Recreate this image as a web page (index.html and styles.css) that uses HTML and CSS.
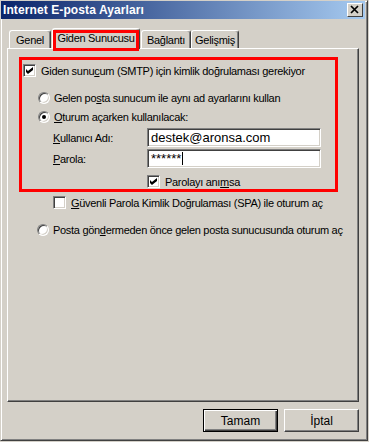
FILE: index.html
```html
<!DOCTYPE html>
<html lang="tr">
<head>
  <meta charset="UTF-8">
  <title>Internet E-posta Ayarları</title>
  <link rel="stylesheet" href="styles.css">
</head>
<body>
  <div class="window">
    <div class="titlebar">
      <span class="title">Internet E-posta Ayarları</span>
      <span class="close">
        <svg width="16" height="14" viewBox="0 0 16 14">
          <path d="M4 3 L11 10 M11 3 L4 10" stroke="#000" stroke-width="1.7" fill="none"/>
        </svg>
      </span>
    </div>

    <div class="tabs">
      <div class="tab t-genel">Genel</div>
      <div class="tab t-giden active">Giden Sunucusu</div>
      <div class="tab t-baglanti">Bağlantı</div>
      <div class="tab t-gelismis">Gelişmiş</div>
    </div>

    <div class="panel">
      <div class="mark">
        <div class="row r-first">
          <span class="check on"></span>
          <span class="label">Giden sunu<u>c</u>um (SMTP) için kimlik doğrulaması gerekiyor</span>
        </div>
        <div class="row r-radio r-gap">
          <span class="radio"></span>
          <span class="label">Gelen po<u>s</u>ta sunucum ile aynı ad ayarlarını kullan</span>
        </div>
        <div class="row r-radio">
          <span class="radio on"></span>
          <span class="label"><u>O</u>turum açarken kullanılacak:</span>
        </div>
        <div class="row r-field">
          <span class="field-label"><u>K</u>ullanıcı Adı:</span>
          <span class="field">destek@aronsa.com</span>
        </div>
        <div class="row r-field">
          <span class="field-label"><u>P</u>arola:</span>
          <span class="field">******<span class="caret"></span></span>
        </div>
        <div class="row r-remember">
          <span class="check on"></span>
          <span class="label">Parolayı anı<u>m</u>sa</span>
        </div>
      </div>

      <div class="row r-spa">
        <span class="check"></span>
        <span class="label"><u>G</u>üvenli Parola Kimlik Doğrulaması (SPA) ile oturum aç</span>
      </div>
      <div class="row r-radio r-before">
        <span class="radio"></span>
        <span class="label">Posta gön<u>d</u>ermeden önce gelen posta sunucusunda oturum aç</span>
      </div>
    </div>

    <div class="buttons">
      <button class="btn default">Tamam</button>
      <button class="btn">İptal</button>
    </div>
  </div>
</body>
</html>
```

FILE: styles.css
```css
body {
  margin: 0;
  font-family: "Liberation Sans", Arial, sans-serif;
  font-size: 11px;
  letter-spacing: -0.3px;
  color: #000;
  background: #d4d0c8;
}
.window {
  width: 368px;
  height: 441px;
  box-sizing: border-box;
  background: #d4d0c8;
  border: 1px solid;
  border-color: #d4d0c8 #404040 #404040 #d4d0c8;
  box-shadow: inset 1px 1px #fff, inset -1px -1px #808080;
}
.titlebar {
  height: 18px;
  margin-right: 2px;
  padding: 0 2px 0 2px;
  display: flex;
  align-items: center;
  justify-content: space-between;
  background: linear-gradient(to right, #0a246a, #a6caf0);
}
.title {
  color: #fff;
  font-weight: bold;
  font-size: 12px;
  letter-spacing: 0.1px;
}
.close {
  width: 16px;
  height: 14px;
  box-sizing: border-box;
  background: #d4d0c8;
  border: 1px solid;
  border-color: #fff #404040 #404040 #fff;
  display: flex;
  align-items: center;
  justify-content: center;
}
.close svg { margin: -1px; }

.tabs {
  display: flex;
  align-items: flex-end;
  height: 20px;
  margin-top: 9px;
  padding-left: 8px;
}
.tab {
  height: 18px;
  box-sizing: border-box;
  padding-top: 2px;
  text-align: center;
  border: 1px solid;
  border-bottom: none;
  border-color: #fff #404040 #404040 #fff;
  border-radius: 3px 3px 0 0;
  box-shadow: inset -1px 0 #808080;
  line-height: 14px;
}
.t-genel { width: 42px; }
.t-giden { width: 88px; }
.t-baglanti { width: 50px; }
.t-gelismis { width: 48px; }
.tab.active {
  position: relative;
  z-index: 1;
  height: 21px;
  margin: 0 1px -1px 1px;
  background: #d4d0c8;
  padding-top: 2px;
}
.tab.active::after {
  content: "";
  position: absolute;
  top: 1px;
  left: 0;
  right: 0;
  bottom: -2px;
  border: 3px solid #f00;
}

.panel {
  width: 352px;
  height: 354px;
  box-sizing: border-box;
  margin-left: 6px;
  padding: 8px 0 0 11px;
  border: 1px solid;
  border-color: #fff #404040 #404040 #fff;
  box-shadow: inset -1px -1px #808080;
}
.mark {
  width: 319px;
  box-sizing: border-box;
  border: 3px solid #f00;
  padding: 4px 0 1px 1px;
}
.row {
  display: flex;
  align-items: center;
  white-space: nowrap;
}
.r-first { height: 13px; }
.r-radio { height: 19px; padding-left: 15px; }
.r-gap { margin-top: 11px; }
.r-field {
  height: 19px;
  margin-top: 2px;
  padding-left: 30px;
}
.r-remember {
  height: 13px;
  margin-top: 7px;
  padding-left: 124px;
}
.r-spa {
  height: 13px;
  margin-top: 4px;
  padding-left: 34px;
}
.r-before {
  margin-top: 11px;
  padding-left: 18px;
}
.label { padding-left: 5px; }
.r-radio .label { padding-left: 4px; }

.check {
  width: 13px;
  height: 13px;
  flex: none;
  box-sizing: border-box;
  background: #fff;
  border: 1px solid;
  border-color: #808080 #fff #fff #808080;
  box-shadow: inset 1px 1px #404040, inset -1px -1px #d4d0c8;
  position: relative;
}
.check.on::after {
  content: "";
  position: absolute;
  left: 2px;
  top: 2px;
  width: 7px;
  height: 7px;
  background: #000;
  clip-path: polygon(0 28%, 28% 57%, 100% 0, 100% 43%, 28% 100%, 0 71%);
}
.radio {
  width: 12px;
  height: 12px;
  flex: none;
  box-sizing: border-box;
  border-radius: 50%;
  background: #fff;
  border: 1px solid;
  border-color: #808080 #fff #fff #808080;
  box-shadow: inset 1px 1px #404040, inset -1px -1px #d4d0c8;
  position: relative;
}
.radio.on::after {
  content: "";
  position: absolute;
  left: 3px;
  top: 3px;
  width: 4px;
  height: 4px;
  border-radius: 50%;
  background: #000;
}
.field-label {
  width: 94px;
  flex: none;
}
.field {
  width: 174px;
  height: 19px;
  box-sizing: border-box;
  padding: 0 3px;
  background: #fff;
  border: 1px solid;
  border-color: #808080 #fff #fff #808080;
  box-shadow: inset 1px 1px #404040, inset -1px -1px #d4d0c8;
  font-family: Arial, "Liberation Sans", sans-serif;
  font-size: 13px;
  letter-spacing: 0;
  line-height: 17px;
  display: flex;
  align-items: center;
}
.caret {
  width: 1px;
  height: 13px;
  margin-left: 1px;
  background: #000;
}

.buttons {
  width: 352px;
  margin: 7px 0 0 6px;
  display: flex;
  justify-content: flex-end;
  gap: 6px;
}
.btn {
  width: 75px;
  height: 23px;
  box-sizing: border-box;
  padding: 0;
  font-family: "Liberation Sans", Arial, sans-serif;
  font-size: 12px;
  color: #000;
  background: #d4d0c8;
  border: 1px solid;
  border-color: #fff #404040 #404040 #fff;
  box-shadow: inset -1px -1px #808080;
}
.btn.default {
  border: 1px solid #000;
  box-shadow: inset 1px 1px #fff, inset -1px -1px #404040, inset -2px -2px #808080;
}
```
